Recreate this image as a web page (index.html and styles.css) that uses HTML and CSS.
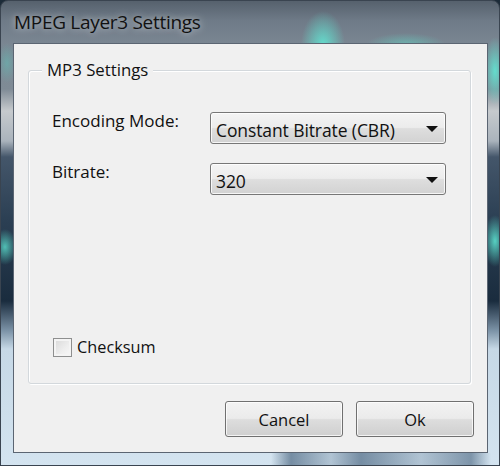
FILE: index.html
```html
<!DOCTYPE html>
<html>
<head>
<meta charset="utf-8">
<link rel="stylesheet" href="styles.css">
</head>
<body>
<div class="window">
  <div class="titlebar"><span class="title">MPEG Layer3 Settings</span></div>
  <div class="client">
    <div class="groupbox">
      <span class="legend">MP3 Settings</span>
      <div class="form">
        <span class="label">Encoding Mode:</span>
        <div class="combo"><span class="combo-text">Constant Bitrate (CBR)</span><span class="arrow"></span></div>
        <span class="label">Bitrate:</span>
        <div class="combo"><span class="combo-text">320</span><span class="arrow"></span></div>
      </div>
      <div class="check"><span class="box"></span><span class="check-label">Checksum</span></div>
    </div>
    <div class="buttons">
      <div class="btn">Cancel</div>
      <div class="btn">Ok</div>
    </div>
  </div>
</div>
</body>
</html>
```
FILE: styles.css
```css
html, body {
  margin: 0;
  padding: 0;
  background: #1c2b38;
}
.window {
  width: 500px;
  height: 466px;
  box-sizing: border-box;
  display: flex;
  flex-direction: column;
  border-radius: 8px 8px 0 0;
  border: 1px solid #3a4450;
  overflow: hidden;
  font-family: "Open Sans", "Noto Sans", sans-serif;
  background:
    radial-gradient(ellipse 22px 34px at 322px 44px, rgba(95,235,215,.85), rgba(95,235,215,0)),
    radial-gradient(ellipse 40px 12px at 405px 44px, rgba(95,225,205,.5), rgba(95,225,205,0)),
    radial-gradient(ellipse 12px 34px at 494px 70px, rgba(95,235,215,.85), rgba(95,235,215,0)),
    radial-gradient(ellipse 12px 26px at 494px 240px, rgba(95,235,215,.85), rgba(95,235,215,0)),
    radial-gradient(ellipse 12px 18px at 4px 246px, rgba(95,235,215,.75), rgba(95,235,215,0)),
    radial-gradient(ellipse 10px 20px at 6px 62px, rgba(95,200,190,.45), rgba(95,200,190,0)),
    linear-gradient(to right, rgba(40,70,100,0) 270px, rgba(40,70,100,.55) 290px, rgba(40,70,100,.2) 330px, rgba(40,70,100,.55) 360px, rgba(40,70,100,.2) 420px, rgba(40,70,100,.5) 470px, rgba(40,70,100,0) 490px) bottom / 100% 12px no-repeat,
    linear-gradient(to bottom, #56616d 0, #6f7b88 20px, #7a8692 43px, #7f8b96 88px, #c6cacd 110px, #aab3bc 140px, #44566a 156px, #2b3f53 220px, #1a2c3e 300px, #7d94a8 330px, #c6d8e6 348px, #d4e4f0 466px);
}
.titlebar {
  height: 42px;
  flex: none;
  display: flex;
  align-items: center;
  padding-left: 13px;
}
.title {
  font-size: 19px;
  color: #111;
  text-shadow: 0 0 6px rgba(255,255,255,.5), 0 0 12px rgba(255,255,255,.3);
  letter-spacing: -0.3px;
}
.client {
  flex: 1;
  margin: 0 11px 12px 12px;
  background: #f0f0f0;
  border: 1px solid #5b6572;
  display: flex;
  flex-direction: column;
}
.groupbox {
  margin: 26px 16px 0 14px;
  height: 314px;
  box-sizing: border-box;
  border: 1px solid #d3d8dc;
  border-radius: 3px;
  box-shadow: 1px 1px 0 #ffffff, inset 1px 1px 0 #ffffff;
  display: flex;
  flex-direction: column;
  padding: 0 23px;
}
.legend {
  align-self: flex-start;
  margin: -11px 0 0 -10px;
  padding: 0 5px;
  background: #f0f0f0;
  font-size: 16.8px;
  line-height: 20px;
  color: #111;
}
.form {
  display: grid;
  grid-template-columns: 158px 236px;
  row-gap: 19px;
  margin-top: 32px;
}
.label {
  font-size: 17px;
  line-height: 20px;
  color: #111;
  margin-top: -1px;
}
.combo {
  height: 32px;
  box-sizing: border-box;
  border: 1px solid #777;
  border-radius: 3px;
  background: linear-gradient(to bottom, #f4f4f4 0, #ececec 48%, #dedede 52%, #d2d2d2 100%);
  box-shadow: inset 0 0 0 1px rgba(255,255,255,.8);
  display: flex;
  align-items: flex-end;
  justify-content: space-between;
  padding: 0 7px 2px 5px;
}
.combo-text {
  font-size: 17.5px;
  line-height: 22px;
  color: #111;
  letter-spacing: -0.1px;
}
.arrow {
  width: 0;
  height: 0;
  border-left: 6px solid transparent;
  border-right: 6px solid transparent;
  border-top: 6px solid #111;
  margin-bottom: 9px;
}
.check {
  margin-top: auto;
  margin-bottom: 26px;
  display: flex;
  align-items: center;
  gap: 5px;
}
.box {
  width: 19px;
  height: 19px;
  box-sizing: border-box;
  border: 1px solid #8e8f8f;
  background: linear-gradient(135deg, #d8d8d8 0, #eeeeee 60%, #f8f8f8 100%);
  box-shadow: inset 0 0 0 2px #f4f4f4;
  margin-left: 1px;
}
.check-label {
  font-size: 16.3px;
  line-height: 20px;
  color: #111;
}
.buttons {
  margin-top: auto;
  margin-bottom: 15px;
  margin-right: 13px;
  display: flex;
  justify-content: flex-end;
  gap: 13px;
}
.btn {
  width: 118px;
  height: 36px;
  box-sizing: border-box;
  border: 1px solid #707070;
  border-radius: 3px;
  background: linear-gradient(to bottom, #f3f3f3 0, #ebebeb 48%, #dddddd 52%, #cfcfcf 100%);
  box-shadow: inset 0 0 0 1px rgba(255,255,255,.75);
  font-size: 16.5px;
  color: #111;
  display: flex;
  align-items: center;
  justify-content: center;
}
```
